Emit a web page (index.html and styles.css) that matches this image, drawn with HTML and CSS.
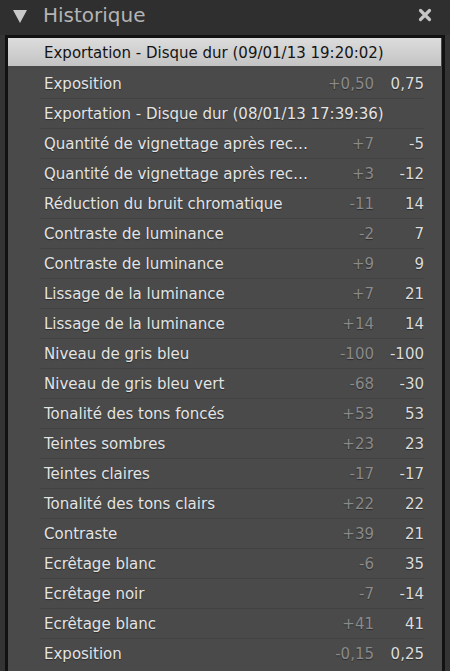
FILE: index.html
```html
<!DOCTYPE html>
<html lang="fr">
<head>
<meta charset="utf-8">
<title>Historique</title>
<link rel="stylesheet" href="styles.css">
</head>
<body>
<div class="window">
  <header class="head">
    <svg class="tri" width="14" height="14" viewBox="0 0 14 14"><polygon points="0,1 14,1 7,14" fill="#c8c8c8"/></svg>
    <span class="title">Historique</span>
    <svg class="close" width="14" height="14" viewBox="0 0 14 14"><path d="M2.5 2.5 L11.5 11.5 M11.5 2.5 L2.5 11.5" stroke="#c4c4c4" stroke-width="3.2" stroke-linecap="round"/></svg>
  </header>
  <div class="panel">
    <div class="row sel"><div class="inner"><span class="name">Exportation - Disque dur (09/01/13 19:20:02)</span></div></div>
    <div class="row"><div class="inner"><span class="name">Exposition</span><span class="d">+0,50</span><span class="v">0,75</span></div></div>
    <div class="row"><div class="inner"><span class="name">Exportation - Disque dur (08/01/13 17:39:36)</span></div></div>
    <div class="row"><div class="inner"><span class="name">Quantité de vignettage après rec…</span><span class="d">+7</span><span class="v">-5</span></div></div>
    <div class="row"><div class="inner"><span class="name">Quantité de vignettage après rec…</span><span class="d">+3</span><span class="v">-12</span></div></div>
    <div class="row"><div class="inner"><span class="name">Réduction du bruit chromatique</span><span class="d">-11</span><span class="v">14</span></div></div>
    <div class="row"><div class="inner"><span class="name">Contraste de luminance</span><span class="d">-2</span><span class="v">7</span></div></div>
    <div class="row"><div class="inner"><span class="name">Contraste de luminance</span><span class="d">+9</span><span class="v">9</span></div></div>
    <div class="row"><div class="inner"><span class="name">Lissage de la luminance</span><span class="d">+7</span><span class="v">21</span></div></div>
    <div class="row"><div class="inner"><span class="name">Lissage de la luminance</span><span class="d">+14</span><span class="v">14</span></div></div>
    <div class="row"><div class="inner"><span class="name">Niveau de gris bleu</span><span class="d">-100</span><span class="v">-100</span></div></div>
    <div class="row"><div class="inner"><span class="name">Niveau de gris bleu vert</span><span class="d">-68</span><span class="v">-30</span></div></div>
    <div class="row"><div class="inner"><span class="name">Tonalité des tons foncés</span><span class="d">+53</span><span class="v">53</span></div></div>
    <div class="row"><div class="inner"><span class="name">Teintes sombres</span><span class="d">+23</span><span class="v">23</span></div></div>
    <div class="row"><div class="inner"><span class="name">Teintes claires</span><span class="d">-17</span><span class="v">-17</span></div></div>
    <div class="row"><div class="inner"><span class="name">Tonalité des tons clairs</span><span class="d">+22</span><span class="v">22</span></div></div>
    <div class="row"><div class="inner"><span class="name">Contraste</span><span class="d">+39</span><span class="v">21</span></div></div>
    <div class="row"><div class="inner"><span class="name">Ecrêtage blanc</span><span class="d">-6</span><span class="v">35</span></div></div>
    <div class="row"><div class="inner"><span class="name">Ecrêtage noir</span><span class="d">-7</span><span class="v">-14</span></div></div>
    <div class="row"><div class="inner"><span class="name">Ecrêtage blanc</span><span class="d">+41</span><span class="v">41</span></div></div>
    <div class="row"><div class="inner"><span class="name">Exposition</span><span class="d">-0,15</span><span class="v">0,25</span></div></div>
  </div>
</div>
</body>
</html>
```
FILE: styles.css
```css
html, body {
  margin: 0;
  padding: 0;
  background: #363636;
  height: 100%;
  overflow: hidden;
}
.window {
  width: 450px;
  height: 671px;
  display: flex;
  flex-direction: column;
  background: #343434;
  font-family: "DejaVu Sans", "Liberation Sans", sans-serif;
}
.head {
  height: 35px;
  flex: none;
  display: flex;
  align-items: center;
  padding: 0 18px 0 13px;
  box-sizing: border-box;
  background: #2f2f2f;
}
.tri {
  flex: none;
  margin-top: -4px;
}
.title {
  flex: 1;
  margin-left: 16px;
  margin-top: -6px;
  font-size: 20px;
  color: #b4b4b4;
}
.close {
  flex: none;
  margin-top: -6px;
}
.panel {
  flex: 1;
  margin: 0 5px 0 5px;
  border: 3px solid #121212;
  border-bottom: none;
  background: #4a4a4a;
  padding-top: 0;
  box-sizing: border-box;
}
.row {
  height: 30px;
}
.inner {
  height: 30px;
  margin: 0 18px 0 32px;
  padding: 1px 0 0 4px;
  box-sizing: border-box;
  display: flex;
  align-items: center;
  border-top: 1px solid #424242;
  font-size: 15px;
  color: #e4e4e4;
  text-shadow: 0 1px 1px rgba(0,0,0,0.4);
}
.row:first-child .inner,
.row:nth-child(2) .inner {
  border-top-color: transparent;
}
.row.sel {
  height: 28px;
  margin: 0 1px 2px 0;
  background: linear-gradient(#dcdcdc, #c4c4c4);
}
.row.sel .inner {
  height: 28px;
  padding: 0 0 0 4px;
  color: #141414;
  text-shadow: none;
}
.name {
  flex: 1;
  min-width: 0;
  white-space: nowrap;
}
.d {
  width: 60px;
  text-align: right;
  color: #8a8a8a;
}
.v {
  width: 50px;
  text-align: right;
  color: #dcdcdc;
}
```
